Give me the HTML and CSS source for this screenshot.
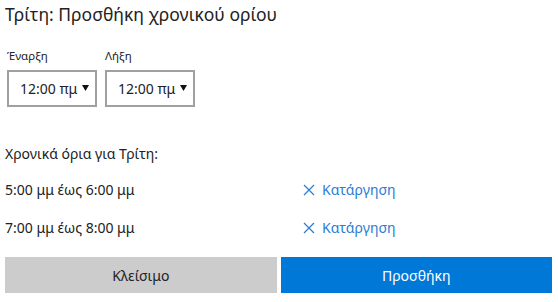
FILE: index.html
```html
<!DOCTYPE html>
<html lang="el">
<head>
  <meta charset="UTF-8">
  <title>Χρονικά όρια</title>
  <link rel="stylesheet" href="styles.css">
</head>
<body>
  <div class="dialog">
    <h1 class="dialog-title">Τρίτη: Προσθήκη χρονικού ορίου</h1>

    <div class="range-picker">
      <div class="field">
        <label for="start">Έναρξη</label>
        <div class="select-box">
          <select id="start">
            <option>12:00 πμ</option>
          </select>
          <svg class="caret" width="7" height="6" viewBox="0 0 7 6"><polygon points="0,0 7,0 3.5,6" fill="#111"/></svg>
        </div>
      </div>
      <div class="field">
        <label for="end">Λήξη</label>
        <div class="select-box">
          <select id="end">
            <option>12:00 πμ</option>
          </select>
          <svg class="caret" width="7" height="6" viewBox="0 0 7 6"><polygon points="0,0 7,0 3.5,6" fill="#111"/></svg>
        </div>
      </div>
    </div>

    <p class="list-heading">Χρονικά όρια για Τρίτη:</p>

    <ul class="limit-list">
      <li class="limit-row">
        <span>5:00 μμ έως 6:00 μμ</span>
        <a href="#" class="remove-link">
          <svg width="12" height="12" viewBox="0 0 12 12"><path d="M1 1 L11 11 M11 1 L1 11" stroke="currentColor" stroke-width="1.2" fill="none"/></svg>
          Κατάργηση
        </a>
      </li>
      <li class="limit-row">
        <span>7:00 μμ έως 8:00 μμ</span>
        <a href="#" class="remove-link">
          <svg width="12" height="12" viewBox="0 0 12 12"><path d="M1 1 L11 11 M11 1 L1 11" stroke="currentColor" stroke-width="1.2" fill="none"/></svg>
          Κατάργηση
        </a>
      </li>
    </ul>

    <div class="actions">
      <button type="button" class="btn btn-close">Κλείσιμο</button>
      <button type="button" class="btn btn-add">Προσθήκη</button>
    </div>
  </div>
</body>
</html>
```

FILE: styles.css
```css
/* dialog base */
body {
  margin: 0;
  background: #fff;
  color: #222;
  font-family: "Noto Sans", "Open Sans", sans-serif;
}

.dialog {
  padding: 0 6px 0 5px;
}

.dialog-title {
  margin: 0;
  padding-top: 1px;
  font-size: 17.5px;
  font-weight: normal;
  line-height: 26px;
}

/* start / end selects */
.range-picker {
  display: flex;
  gap: 8px;
  margin-top: 21px;
  padding-left: 2px;
}

.field label {
  display: block;
  font-size: 11.5px;
  line-height: 16px;
  margin-bottom: 6px;
}

.select-box {
  position: relative;
  width: 90px;
  height: 37px;
  box-sizing: border-box;
  border: 2px solid #a0a0a0;
}

.select-box select {
  appearance: none;
  -webkit-appearance: none;
  border: none;
  background: transparent;
  width: 100%;
  height: 100%;
  padding: 0 0 0 11px;
  font-family: inherit;
  font-size: 14px;
  color: #222;
  outline: none;
}

.caret {
  position: absolute;
  right: 6px;
  top: 13px;
  pointer-events: none;
}

/* list of limits */
.list-heading {
  margin: 36px 0 0;
  font-size: 14px;
  line-height: 22px;
}

.limit-list {
  list-style: none;
  margin: 14px 0 0;
  padding: 0;
}

.limit-row {
  display: grid;
  grid-template-columns: 298px 1fr;
  font-size: 14px;
  line-height: 22px;
  margin-bottom: 16px;
}

.remove-link {
  color: #2b7cd3;
  text-decoration: none;
  display: inline-flex;
  align-items: center;
  gap: 7px;
}

/* buttons */
.actions {
  display: grid;
  grid-template-columns: 1fr 1fr;
  gap: 4px;
  margin-top: 18px;
}

.btn {
  height: 36px;
  border: none;
  font-family: inherit;
  font-size: 14px;
}

.btn-close {
  background: #cccccc;
  color: #222;
}

.btn-add {
  background: #0078d7;
  color: #fff;
}
```
